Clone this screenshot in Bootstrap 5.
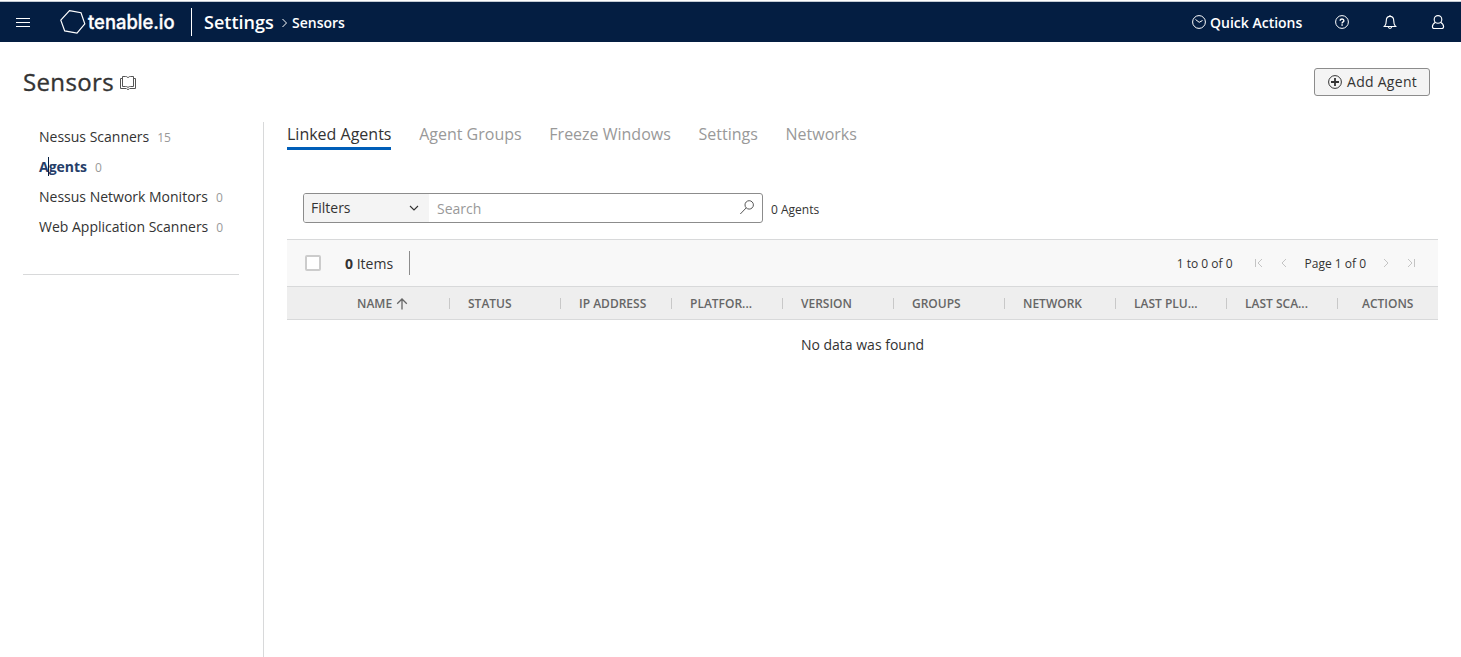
<!DOCTYPE html>
<html lang="en">
<head>
<meta charset="utf-8">
<meta name="viewport" content="width=device-width, initial-scale=1">
<title>Sensors</title>
<link href="https://cdn.jsdelivr.net/npm/bootstrap@5.3.0/dist/css/bootstrap.min.css" rel="stylesheet">
<style>
body{font-family:"Open Sans",sans-serif;font-size:14px;line-height:20px;color:#333;background:#fff;height:657px;overflow:hidden}
svg{display:block;flex:none;fill:none;stroke:currentColor}
a{color:inherit;text-decoration:none}
.topbar{height:42px;background:#041e42;color:#fff;border-top:1px solid #fff;box-shadow:inset 0 1px #c3cad3;padding:1px 16px 0 16px;font-weight:600}
.topbar span,.quick{padding-top:2px}
.menu-icon{margin-right:30px}
.brand{width:132px;height:28px;border-right:1px solid #fff}
.brand text{font:500 20px Inter,sans-serif;fill:#fff;stroke:#fff;stroke-width:.35}
.topbar .crumb-main{font-size:18px;width:70px;margin-left:12px;padding-top:0}
.crumb-arrow{margin:1px 4px 0 7px}
.quick{width:96px;margin-left:4px;margin-right:29px}
.page-head{height:80px;padding:0 31px 0 23px}
.page-head h1{font-size:24px;line-height:32px;font-weight:400;width:91px;letter-spacing:.35px;-webkit-text-stroke:.35px #333}
.book{margin:2px 0 0 6px}
.add-btn{width:116px;height:28px;border:1px solid #8c8c8c;border-radius:3px;background:#f4f4f4;color:#333;font-size:14px;line-height:20px;padding:0 0 0 13px;gap:4px;letter-spacing:.28px;white-space:nowrap}
.side{width:264px;border-right:1px solid #d8d9da;padding:0 24px 0 23px}
.side-list{height:153px;border-bottom:1px solid #d8d9da}
.side-list a{height:30px;padding-left:16px}
.side-list small{font-size:12px;color:#999;margin-left:8px;padding-top:1px}
.side-list .current{color:#263e69;font-weight:700}
.current small{font-weight:400}
.caret{left:25px;top:5px;width:1px;height:19px;background:#041e42}
.main-area{padding-left:23px;padding-right:23px}
.tabs{font-size:16px;line-height:25px;gap:27.7px;color:#999;height:28px}
.tabs .active{color:#333;border-bottom:3px solid #005eb8}
.search-row{margin:43px 0 0 16px;height:30px}
.search-box{width:460px;height:30px;border:1px solid #8c8c8c;border-radius:3px}
.filter-menu{width:125px;background:#f4f4f4;padding:0 10px 0 7px}
.search-field{color:#999;padding:2px 7px 0 8px}
.search-field svg{margin-top:-3px}
.fine{font-size:12px}
.toolbar{height:48px;margin-top:16px;background:#f8f8f8;border-top:1px solid #d8d9da;border-bottom:1px solid #d8d9da;padding:0 23px 0 18px}
.check{width:16px;height:16px;border:2px solid #ccc;border-radius:2px;background:#fff;margin-right:24px}
.items{width:65px;height:24px;border-right:1px solid #8c8c8c;line-height:25px}
.pager span{padding-top:2px}
.pager svg{color:#c4c4c4}
.heads{height:33px;background:#eee;border-bottom:1px solid #d8d9da;padding-left:52px;font-size:12px;font-weight:600;color:#666}
.heads>div{width:111px;padding-left:18px;height:11px;line-height:12px;border-right:1px solid #c8c8c8;white-space:nowrap}
.heads>div:last-child{border:0;width:100px;padding-left:24px}
.heads svg{display:inline-block;vertical-align:-2px;margin:-2px 0 0 4px}
.empty{padding:15px 0 0;text-align:center}
</style>
</head>
<body class="d-flex flex-column">
<header class="topbar d-flex align-items-center flex-shrink-0">
  <svg class="menu-icon" width="14" height="10" viewBox="0 0 14 10"><path d="M0 1.5h14M0 5.5h14M0 9.5h14"/></svg>
  <a class="brand d-block" href="#"><svg width="130" height="28" viewBox="0 0 130 28"><path d="M9.5 2.7 21 4.7 24.8 15.8 17 25.2 4.7 22.9.8 12.2Z" stroke-width="1.2"/><text x="28" y="20.5" textLength="86.5" lengthAdjust="spacingAndGlyphs">tenable.io</text></svg></a>
  <span class="crumb-main">Settings</span>
  <svg class="crumb-arrow" width="7" height="10" viewBox="0 0 7 10"><path d="m1.5 1 4 4-4 4"/></svg>
  <span>Sensors</span>
  <svg class="ms-auto" width="14" height="14" viewBox="0 0 14 14"><circle cx="7" cy="7" r="6.4"/><path d="m3.5 4.5 3.7 2.8L10.5 5.5"/></svg>
  <a class="quick" href="#">Quick Actions</a>
  <svg width="14" height="14" viewBox="0 0 14 14"><circle cx="7" cy="7" r="6.4"/><path stroke-width="1.4" d="M5.2 5.7c0-2.4 3.7-2.3 3.7 0 0 1.3-1.8 1.2-1.8 2.7M7.1 9.3v1.4"/></svg>
  <svg style="margin-left:34px" width="14" height="14" viewBox="0 0 14 14"><path stroke-width="1.15" d="M7 0v1.2M.5 11.5h13M1.5 11.5c1.4-1.6 1.8-3.2 1.8-6C3.3 2.6 4.8 1.3 7 1.3s3.7 1.3 3.7 4.2c0 2.8.4 4.4 1.8 6M5.3 12c.4 1.8 3 1.8 3.4 0"/></svg>
  <svg style="margin-left:34px" width="14" height="14" viewBox="0 0 14 14"><g stroke-width="1.15"><circle cx="7" cy="4.4" r="3.8"/><path d="M4.5 7.3C2.2 8.7 1.4 10 1.4 11.8c0 1.2.6 1.7 1.6 1.7h8c1 0 1.6-.5 1.6-1.7 0-1.8-.8-3.1-3.1-4.5"/></g></svg>
</header>
<div class="page-head d-flex align-items-center flex-shrink-0">
  <h1 class="m-0">Sensors</h1>
  <svg class="book" width="16" height="14" viewBox="0 0 16 14"><path stroke="#555" d="M2.5 2.5h-2v10h5.8c.5 1.2 2.9 1.2 3.4 0h5.8v-10h-2M2.5 10.5V.5h3.2C7 .5 8 1.2 8 2c0-.8 1-1.5 2.3-1.5h3.2v10h-3.2c-1.3 0-2.3.5-2.3 1.2 0-.7-1-1.2-2.3-1.2Z"/></svg>
  <button class="add-btn ms-auto d-flex align-items-center" type="button"><svg width="15" height="14" viewBox="0 0 15 14"><circle cx="7" cy="7" r="6.4"/><path stroke-width="1.8" d="M7 3v8M3 7h8"/></svg>Add Agent</button>
</div>
<div class="d-flex flex-grow-1">
  <aside class="side flex-shrink-0">
    <nav class="side-list">
      <a class="d-flex align-items-center" href="#">Nessus Scanners<small>15</small></a>
      <a class="current d-flex align-items-center position-relative" href="#">Agents<small>0</small><i class="caret position-absolute"></i></a>
      <a class="d-flex align-items-center" href="#">Nessus Network Monitors<small>0</small></a>
      <a class="d-flex align-items-center" href="#">Web Application Scanners<small>0</small></a>
    </nav>
  </aside>
  <main class="main-area flex-grow-1">
    <nav class="tabs d-flex"><a class="active" href="#">Linked Agents</a><a href="#">Agent Groups</a><a href="#">Freeze Windows</a><a href="#">Settings</a><a href="#">Networks</a></nav>
    <div class="search-row d-flex align-items-center">
      <div class="search-box d-flex overflow-hidden">
        <div class="filter-menu d-flex align-items-center justify-content-between">Filters<svg width="10" height="6" viewBox="0 0 10 6"><path stroke-width="1.1" d="m1 1 4 4 4-4"/></svg></div>
        <div class="search-field flex-grow-1 d-flex align-items-center justify-content-between">Search<svg width="15" height="15" viewBox="0 0 15 15"><g stroke="#555"><circle cx="9.2" cy="4.9" r="4.2"/><path d="M6.2 7.9.3 14"/></g></svg></div>
      </div>
      <span class="fine ms-2 pt-1">0 Agents</span>
    </div>
    <section class="toolbar d-flex align-items-center">
      <span class="check"></span><span class="items"><b>0</b> Items</span>
      <div class="pager fine ms-auto d-flex align-items-center">
        <span>1 to 0 of 0</span>
        <svg style="margin-left:22px" width="8" height="10" viewBox="0 0 8 10"><path d="M.5 1v8M7 1 3 5l4 4"/></svg>
        <svg style="margin-left:18px" width="6" height="10" viewBox="0 0 6 10"><path d="M5 1 1 5l4 4"/></svg>
        <span style="margin-left:18px">Page 1 of 0</span>
        <svg style="margin-left:17px" width="6" height="10" viewBox="0 0 6 10"><path d="m1 1 4 4-4 4"/></svg>
        <svg style="margin-left:18px" width="8" height="10" viewBox="0 0 8 10"><path d="M7.5 1v8M1 1l4 4-4 4"/></svg>
      </div>
    </section>
    <section class="heads d-flex align-items-center">
      <div>NAME<svg width="12" height="12" viewBox="0 0 12 12"><path stroke-width="1.3" d="M6 11.5V1M1.2 5.8 6 1l4.8 4.8"/></svg></div><div>STATUS</div><div>IP ADDRESS</div><div>PLATFOR...</div><div>VERSION</div><div>GROUPS</div><div>NETWORK</div><div>LAST PLU...</div><div>LAST SCA...</div><div>ACTIONS</div>
    </section>
    <p class="empty m-0">No data was found</p>
  </main>
</div>
<script src="https://cdn.jsdelivr.net/npm/bootstrap@5.3.0/dist/js/bootstrap.bundle.min.js"></script>
</body>
</html>
